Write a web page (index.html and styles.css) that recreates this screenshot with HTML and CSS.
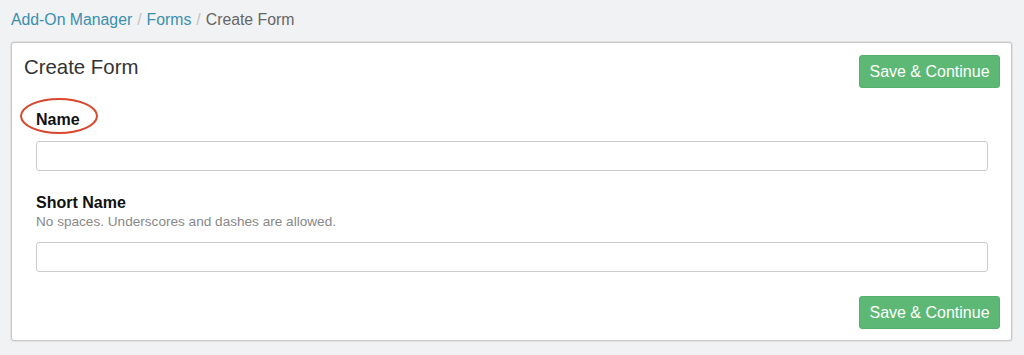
FILE: index.html
```html
<html>
<head>
<meta charset="utf-8">
<link rel="stylesheet" href="styles.css">
</head>
<body>
<div class="crumbs">
<a href="#">Add-On Manager</a><span class="sep">/</span><a href="#">Forms</a><span class="sep">/</span><span class="here">Create Form</span>
</div>
<div class="panel">
<div class="head">
<h2 class="title">Create Form</h2>
<button class="btn-save">Save &amp; Continue</button>
</div>
<div class="field first">
<label class="lbl">Name<span class="mark"></span></label>
<input class="inp" type="text">
</div>
<div class="field">
<label class="lbl">Short Name</label>
<p class="help">No spaces. Underscores and dashes are allowed.</p>
<input class="inp" type="text">
</div>
<div class="foot">
<button class="btn-save">Save &amp; Continue</button>
</div>
</div>
</body>
</html>
```
FILE: styles.css
```css
html
{
background: #f1f2f3;
}
body
{
margin: 0;
font-family: "Liberation Sans", Arial, sans-serif;
color: #333;
}
.crumbs
{
padding: 10px 11px 0 11px;
height: 22px;
font-size: 15.8px;
line-height: 20px;
}
.crumbs a
{
color: #3a8fae;
text-decoration: none;
}
.crumbs .sep
{
color: #c4c4c4;
padding: 0 5px;
}
.crumbs .here
{
color: #666;
}
.panel
{
margin: 10px 12px 0 11px;
background: #fff;
border: 1px solid #c9c9c9;
box-shadow: 0 0 0 1px #e2e2e2;
border-radius: 3px;
padding: 12px 11px 11px 12px;
}
.head
{
display: flex;
justify-content: space-between;
align-items: flex-start;
}
.title
{
margin: 0;
font-size: 20.4px;
font-weight: normal;
line-height: 24px;
color: #333;
}
.btn-save
{
font-family: "Liberation Sans", Arial, sans-serif;
font-size: 16px;
color: #fff;
background: #5cb874;
border: 1px solid #55b06c;
border-radius: 3px;
height: 33px;
width: 141px;
padding: 0;
}
.field
{
padding: 0 12px;
margin-top: 22px;
}
.lbl
{
display: inline-block;
position: relative;
font-size: 16px;
font-weight: bold;
line-height: 20px;
color: #111;
}
.mark
{
position: absolute;
left: -16px;
top: -12px;
width: 74px;
height: 32px;
border: 2px solid #d9482e;
border-radius: 50%;
}
.help
{
margin: 0;
font-size: 13.6px;
line-height: 18px;
color: #888;
}
.inp
{
display: block;
box-sizing: border-box;
width: 100%;
height: 30px;
margin-top: 11px;
border: 1px solid #ccc;
border-radius: 3px;
background: #fff;
outline: none;
}
.foot
{
display: flex;
justify-content: flex-end;
margin-top: 24px;
}
```
